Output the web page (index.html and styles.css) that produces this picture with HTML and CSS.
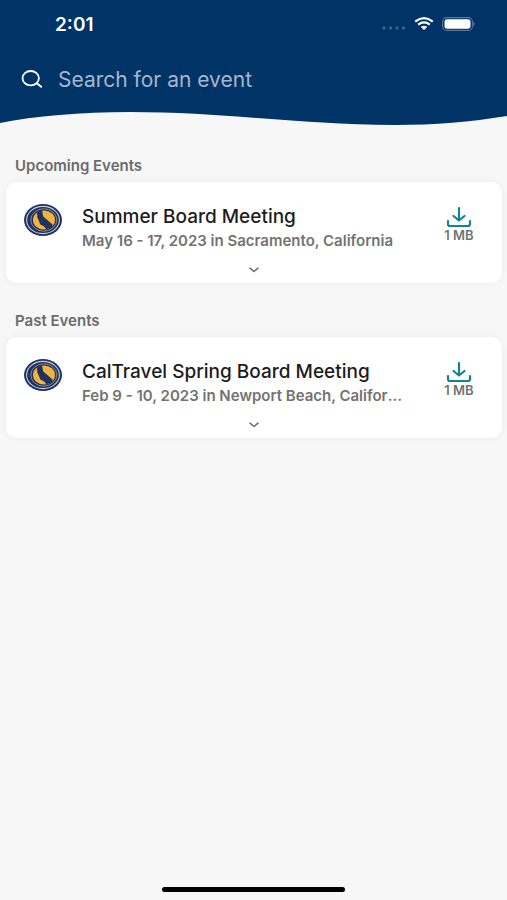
FILE: index.html
```html
<!DOCTYPE html>
<html lang="en">
<head>
    <meta charset="UTF-8">
    <meta name="viewport" content="width=device-width, initial-scale=1.0">
    <title>Events</title>
    <link rel="stylesheet" href="styles.css">
</head>
<body>
    <!-- shared icons -->
    <svg class="sprite" aria-hidden="true">
        <symbol id="logo" viewBox="0 0 38 32">
            <ellipse cx="19" cy="16" rx="19" ry="16" fill="#1d3263"/>
            <ellipse cx="19" cy="16" rx="16.4" ry="13.6" fill="none" stroke="#c3cbdc" stroke-width="1.1"/>
            <ellipse cx="19.8" cy="16" rx="13" ry="11.2" fill="none" stroke="#b59f72" stroke-width=".8"/>
            <ellipse cx="20" cy="16" rx="11" ry="9.6" fill="#f2b340"/>
            <path d="M13 8.8q2-2 5-2.2l1.2 5.8 9.4 8-.5 3.2-5.8 1.6-2.4-3-3.6-1.6-1.5-4.2-1.6-3.2z" fill="#1d3263"/>
        </symbol>
        <symbol id="download" viewBox="0 0 26 22">
            <path d="M13 2v12.5M7.5 10l5.5 4.5 5.5-4.5M2 15v3q0 2 2 2h18q2 0 2-2v-3" fill="none" stroke="currentColor" stroke-width="2.2" stroke-linecap="round" stroke-linejoin="round"/>
        </symbol>
        <symbol id="chevron" viewBox="0 0 10 6">
            <path d="M1 1.2l4 3.3 4-3.3" fill="none" stroke="currentColor" stroke-width="1.5" stroke-linecap="round" stroke-linejoin="round"/>
        </symbol>
    </svg>

    <header class="header">
        <div class="status-bar">
            <span class="time">2:01</span>
            <div class="status-icons">
                <svg width="24" height="4" viewBox="0 0 24 4" class="signal">
                    <circle cx="2" cy="2" r="1.7"/>
                    <circle cx="8.5" cy="2" r="1.7"/>
                    <circle cx="15" cy="2" r="1.7"/>
                    <circle cx="21.5" cy="2" r="1.7"/>
                </svg>
                <svg width="20" height="14" viewBox="0 0 20 14" class="wifi">
                    <path d="M1.2 4.6Q10-2.2 18.8 4.6M4.2 7.6Q10 3.2 15.8 7.6" fill="none" stroke="#fff" stroke-width="2.1"/>
                    <path d="M6.8 10Q10 7.4 13.2 10L10 13z" fill="#fff"/>
                </svg>
                <svg width="33" height="14" viewBox="0 0 33 14">
                    <rect x=".6" y=".6" width="29.8" height="12.8" rx="4" fill="none" stroke="#5c7598" stroke-width="1.1"/>
                    <rect x="2.5" y="2.3" width="26" height="9.4" rx="2.6" fill="#fff"/>
                    <path d="M31.4 4.8q1.4.8 1.4 2.2t-1.4 2.2z" fill="#5c7598"/>
                </svg>
            </div>
        </div>
        <div class="search">
            <svg width="22" height="18" viewBox="0 0 22 18">
                <ellipse cx="9.7" cy="8.2" rx="8.2" ry="7.2" fill="none" stroke="#fff" stroke-width="1.8"/>
                <path d="M15.8 13.2l4.4 3.6" stroke="#fff" stroke-width="1.9" stroke-linecap="round"/>
            </svg>
            <input type="text" placeholder="Search for an event" aria-label="Search for an event">
        </div>
        <svg class="wave" viewBox="0 0 507 16" preserveAspectRatio="none">
            <path d="M0 0H507V6C470 12 435 15 395 15C300 15 225 2 130 2C80 2 35 6 0 13Z" fill="#003366"/>
        </svg>
    </header>

    <main>
        <section>
            <h2>Upcoming Events</h2>
            <article class="card">
                <svg class="logo"><use href="#logo"/></svg>
                <div class="info">
                    <h3>Summer Board Meeting</h3>
                    <p>May 16 - 17, 2023 in Sacramento, California</p>
                </div>
                <button class="download">
                    <svg><use href="#download"/></svg>
                    <span>1 MB</span>
                </button>
                <button class="expand" aria-label="Show details">
                    <svg><use href="#chevron"/></svg>
                </button>
            </article>
        </section>
        <section>
            <h2>Past Events</h2>
            <article class="card">
                <svg class="logo"><use href="#logo"/></svg>
                <div class="info">
                    <h3>CalTravel Spring Board Meeting</h3>
                    <p>Feb 9 - 10, 2023 in Newport Beach, California</p>
                </div>
                <button class="download">
                    <svg><use href="#download"/></svg>
                    <span>1 MB</span>
                </button>
                <button class="expand" aria-label="Show details">
                    <svg><use href="#chevron"/></svg>
                </button>
            </article>
        </section>
    </main>

    <div class="home-bar"></div>
</body>
</html>
```

FILE: styles.css
```css
* {
    box-sizing: border-box;
}

body {
    display: flex;
    flex-direction: column;
    min-height: 100vh;
    margin: 0;
    font-family: Inter, "Liberation Sans", sans-serif;
    background-color: #f7f7f7;
    color: #1c1c1e;
}

h2, h3, p {
    margin: 0;
}

svg {
    display: block;
    flex-shrink: 0;
}

button {
    padding: 0;
    border: none;
    background: none;
    font-family: inherit;
    cursor: pointer;
}

.sprite {
    position: absolute;
    width: 0;
    height: 0;
}

/* Header */
.header {
    display: flex;
    flex-direction: column;
}

.status-bar {
    display: flex;
    justify-content: space-between;
    align-items: center;
    height: 48px;
    padding: 0 32px 0 55px;
    background-color: #003366;
}

.time {
    color: #fff;
    font-size: 19px;
    font-weight: 600;
}

.status-icons {
    display: flex;
    align-items: center;
    gap: 8px;
}

.signal {
    fill: #3d6089;
    margin-top: 8px;
}

.search {
    display: flex;
    align-items: center;
    gap: 15px;
    height: 62px;
    padding: 0 21px;
    background-color: #003366;
}

.search input {
    flex: 1;
    min-width: 0;
    padding: 0;
    border: none;
    outline: none;
    background: none;
    color: #fff;
    font-family: inherit;
    font-size: 21px;
}

.search input::placeholder {
    color: #a6b7cd;
    opacity: 1;
}

.wave {
    width: 100%;
    height: 16px;
}

/* Event list */
main {
    flex: 1;
    padding: 30px 5px 0 6px;
}

section {
    margin-bottom: 28px;
}

h2 {
    padding: 0 9px;
    margin-bottom: 6px;
    font-size: 15px;
    line-height: 20px;
    font-weight: 600;
    color: #6b6b6b;
}

.card {
    display: grid;
    grid-template-columns: 38px 1fr 50px;
    column-gap: 20px;
    padding: 22px 18px 6px;
    border-radius: 10px;
    background-color: #fff;
    box-shadow: 0 0 6px rgba(0, 0, 0, 0.06);
}

.logo {
    width: 38px;
    height: 32px;
}

.info {
    min-width: 0;
    padding-right: 10px;
}

h3 {
    font-size: 19px;
    line-height: 26px;
    font-weight: 500;
}

.info p {
    overflow: hidden;
    text-overflow: ellipsis;
    white-space: nowrap;
    font-size: 15px;
    line-height: 22px;
    font-weight: 600;
    color: #737373;
}

.download {
    display: flex;
    flex-direction: column;
    align-items: center;
    padding-top: 2px;
    color: #148391;
}

.download svg {
    width: 26px;
    height: 22px;
}

.download span {
    font-size: 13px;
    line-height: 14px;
    font-weight: 600;
    color: #737373;
}

.expand {
    grid-column: 1 / -1;
    justify-self: center;
    padding: 15px 12px 4px;
    color: #6b6b6b;
}

.expand svg {
    width: 10px;
    height: 6px;
}

.home-bar {
    width: 36%;
    height: 5px;
    margin: 0 auto 8px;
    border-radius: 3px;
    background-color: #000;
}
```
